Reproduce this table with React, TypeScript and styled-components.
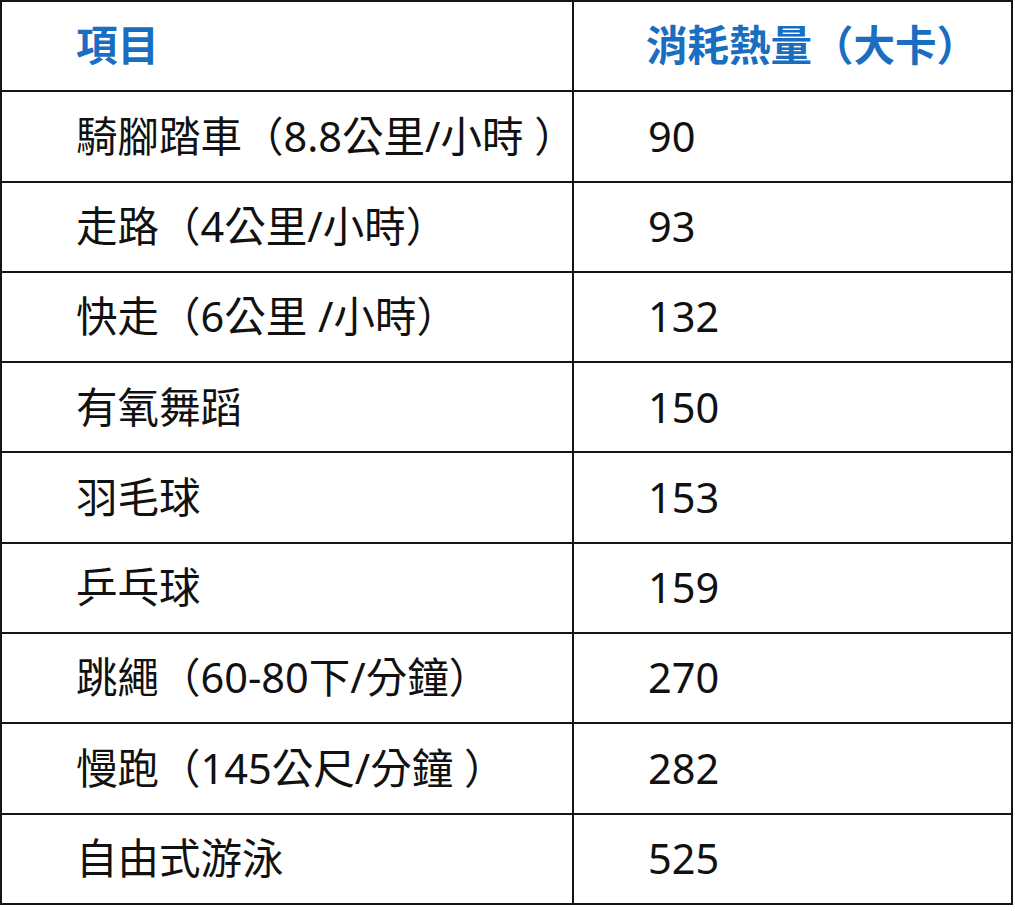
import React from 'react';
import styled, { createGlobalStyle } from 'styled-components';

const GlobalStyle = createGlobalStyle`
  html, body {
    margin: 0;
    padding: 0;
    background: #ffffff;
  }
  body {
    font-family: "Noto Sans", "Noto Sans CJK TC", sans-serif;
  }
`;

const Page = styled.div`
  width: 1015px;
  height: 911px;
  background: #ffffff;
`;

const Table = styled.table`
  border-collapse: collapse;
  width: 1013px;
  table-layout: fixed;
`;

const Row = styled.tr`
  height: 90.3px;
`;

const Cell = styled.td<{ $first?: boolean }>`
  border: 2px solid #151515;
  padding: 0 0 0 ${({ $first }) => ($first ? '74px' : '74px')};
  width: ${({ $first }) => ($first ? '572px' : 'auto')};
  font-size: 41.5px;
  line-height: 1;
  color: #111111;
  white-space: nowrap;
  vertical-align: middle;
  box-sizing: border-box;
`;

const HeadCell = styled(Cell).attrs({ as: 'th' })<{ $first?: boolean }>`
  padding-left: ${({ $first }) => ($first ? '74px' : '72px')};
  text-align: left;
  font-weight: 700;
  color: #1a6ec1;
`;

const rows: [string, string][] = [
  ['騎腳踏車（8.8公里/小時 ）', '90'],
  ['走路（4公里/小時）', '93'],
  ['快走（6公里 /小時）', '132'],
  ['有氧舞蹈', '150'],
  ['羽毛球', '153'],
  ['乒乓球', '159'],
  ['跳繩（60-80下/分鐘）', '270'],
  ['慢跑（145公尺/分鐘 ）', '282'],
  ['自由式游泳', '525'],
];

export default function App() {
  return (
    <Page>
      <GlobalStyle />
      <Table>
        <thead>
          <Row>
            <HeadCell $first>項目</HeadCell>
            <HeadCell>消耗熱量（大卡）</HeadCell>
          </Row>
        </thead>
        <tbody>
          {rows.map(([item, kcal]) => (
            <Row key={item}>
              <Cell $first>{item}</Cell>
              <Cell>{kcal}</Cell>
            </Row>
          ))}
        </tbody>
      </Table>
    </Page>
  );
}
